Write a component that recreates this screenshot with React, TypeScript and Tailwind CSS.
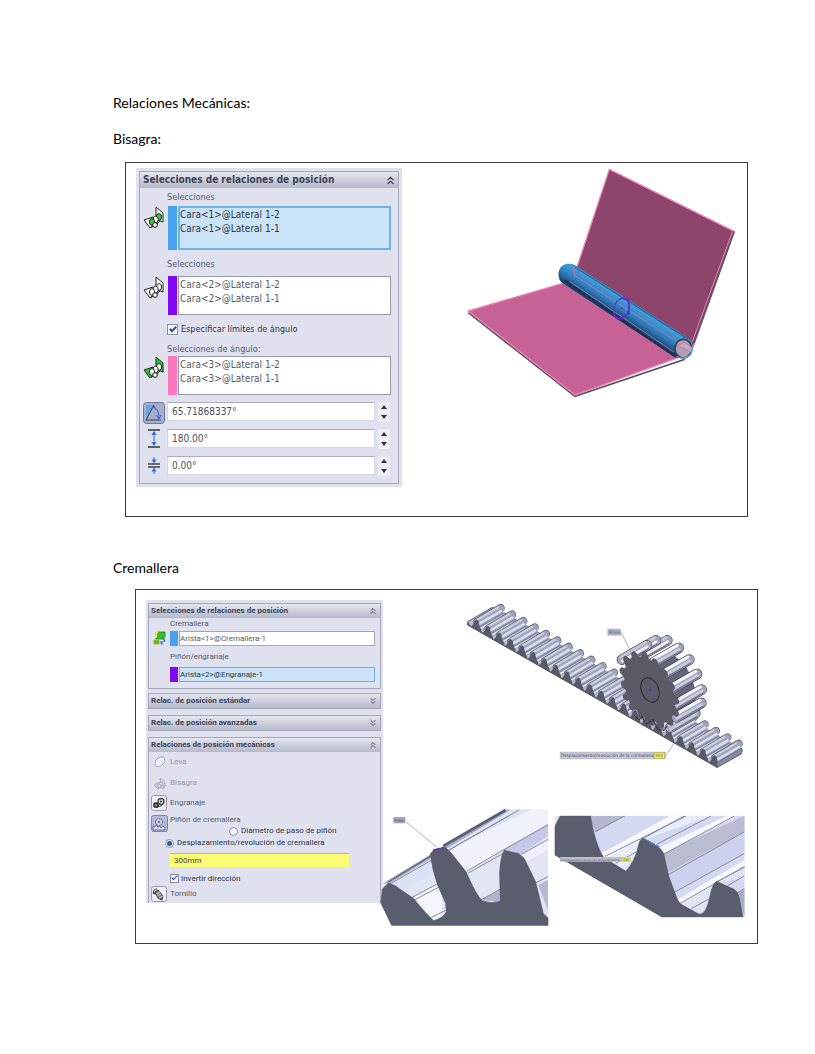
import React from "react";
import { ChevronsDown, ChevronsUp } from "lucide-react";

const uiFont = "font-['DejaVu_Sans_Condensed','DejaVu_Sans',sans-serif]";

function HingeIcon({ pin = "#fff", left = "#fff", right = "#fff" }: { pin?: string; left?: string; right?: string }) {
  return (
    <svg width="22" height="24" viewBox="0 0 22 24" stroke="#222" strokeWidth="1" strokeLinejoin="round" aria-hidden="true">
      <path d="M1 14l9-3 4 6-7 5z" fill={left} />
      <path d="M13 1l7 6v9l-5-2-2-4z" fill={right} />
      <ellipse cx="16" cy="11" rx="2.6" ry="3.4" fill={pin} />
      <ellipse cx="12.6" cy="13.6" rx="2.6" ry="3.4" fill="#fff" />
      <ellipse cx="9" cy="16" rx="2.6" ry="3.4" fill={pin} />
      <path d="M8 21l4-1 5-5" fill="none" />
      <circle cx="12" cy="19" r="2.4" fill="#eee" />
    </svg>
  );
}

function AngleIcon() {
  return (
    <svg width="22" height="22" viewBox="0 0 22 22" aria-hidden="true">
      <rect x="0.5" y="0.5" width="21" height="21" rx="3" fill="#a9adcc" stroke="#73779a" />
      <path d="M3 18L11 3H3z" fill="#6aa5e0" />
      <path d="M3 18L11 3M3 18h15" stroke="#333a55" fill="none" />
      <path d="M10 5c4 1 6 5 6 11M8 7l3-3 2 4M13.500 13l2.500 4 2-4" stroke="#2a63d8" fill="none" />
    </svg>
  );
}

function MaxIcon() {
  return (
    <svg width="14" height="19" viewBox="0 0 14 19" aria-hidden="true">
      <path d="M1 1h12M1 18h12" stroke="#333" strokeWidth="1.500" />
      <path d="M7 3v13" stroke="#2f6fe0" />
      <path d="M4.500 6L7 2l2.500 4zM4.500 13L7 17l2.500-4z" fill="#2f6fe0" />
    </svg>
  );
}

function MinIcon() {
  return (
    <svg width="14" height="19" viewBox="0 0 14 19" aria-hidden="true">
      <path d="M1 8h12M1 11h12" stroke="#444" strokeWidth="1.500" />
      <path d="M7 1v4M7 14v4" stroke="#2f6fe0" />
      <path d="M4.500 3.500h5L7 7.500zM4.500 15.500h5L7 11.500z" fill="#2f6fe0" />
    </svg>
  );
}

function RackSelectIcon() {
  return (
    <svg width="14" height="14" viewBox="0 0 14 14" aria-hidden="true">
      <path d="M3 2l2-1h7v5l-2 2H3z" fill="#2fc42f" stroke="#1a6b1a" strokeWidth="0.700" />
      <path d="M3 1h3L4 3v4H2V3z" fill="#f2df3c" />
      <path d="M1 9h5v4H1z" fill="#33c733" stroke="#c9a528" />
      <path d="M8 12l4-3M10 8l2 1-1 2M8 10v3h2" stroke="#2a62d8" fill="none" />
    </svg>
  );
}

function CamIcon() {
  return (
    <svg width="14" height="14" viewBox="0 0 14 14" aria-hidden="true">
      <path d="M2 9c0-4 3-7 7-7 4 0 3 4 1 7-2 3-8 4-8 0z" fill="#eceef5" stroke="#a3a5b0" />
    </svg>
  );
}

function GrayHingeIcon() {
  return (
    <svg width="14" height="14" viewBox="0 0 14 14" fill="#d4d6df" stroke="#a3a5b0" strokeWidth="0.800" aria-hidden="true">
      <path d="M1 9l5-3 3 4-4 3zM7 2l5 4v5l-4-1z" />
      <circle cx="8" cy="8" r="2" />
      <circle cx="6" cy="10" r="2" />
      <circle cx="9.500" cy="11" r="1.600" />
    </svg>
  );
}

function GearPairIcon() {
  return (
    <svg width="16" height="16" viewBox="0 0 16 16" aria-hidden="true">
      <rect x="0.500" y="0.500" width="15" height="15" rx="2" fill="#eceef5" stroke="#9a9db0" />
      <circle cx="10" cy="6.500" r="3" fill="#ddd" stroke="#444" strokeWidth="1.300" />
      <circle cx="10" cy="6.500" r="1" fill="#333" />
      <circle cx="5" cy="10" r="2.200" fill="#888" stroke="#222" strokeWidth="1.300" />
      <path d="M5 12.500l6-2" stroke="#333" />
    </svg>
  );
}

function PinionIcon() {
  return (
    <svg width="17" height="17" viewBox="0 0 17 17" aria-hidden="true">
      <rect x="0.500" y="0.500" width="16" height="16" rx="2" fill="#b3b6d6" stroke="#8286a8" />
      <circle cx="8" cy="7" r="3.500" fill="#c9cbe4" stroke="#5c6088" strokeDasharray="1.500 .7" />
      <circle cx="8" cy="7" r="1" fill="#5c6088" />
      <path d="M2 13v-2l2 1 1-2 2 2 2-1 1 2 2-2 2 2v2H2z" fill="#d5d7ea" stroke="#5c6088" strokeWidth="0.800" />
    </svg>
  );
}

function ScrewIcon() {
  return (
    <svg width="16" height="16" viewBox="0 0 16 16" aria-hidden="true">
      <rect x="0.500" y="0.500" width="15" height="15" rx="2" fill="#eceef5" stroke="#9a9db0" />
      <path d="M5 5l2-1 5 6-1 4-4-2-3-5z" fill="#777" stroke="#222" strokeWidth="0.800" />
      <path d="M5 8l4-2M6 10l4-2M8 12l4-2" stroke="#eee" strokeWidth="0.800" />
      <path d="M3 8c-1-3 0-5 3-5M3 8l-1-2M3 8l2-1" fill="none" stroke="#222" strokeWidth="0.900" />
    </svg>
  );
}

function PanelHeader({ title, open = true, big = false }: { title: string; open?: boolean; big?: boolean }) {
  const Icon = open ? ChevronsUp : ChevronsDown;
  return (
    <button
      type="button"
      aria-expanded={open}
      className={`flex w-full items-center justify-between bg-linear-to-b from-[#e4e6ef] to-[#b5b9c9] text-left font-bold text-[#3d4256] ${
        big ? "h-4 pr-px pl-[3px] text-[10px] leading-4" : "h-[14px] px-[2px] text-[8px] leading-3"
      }`}
    >
      <span className="whitespace-nowrap">{title}</span>
      <Icon size={big ? 13 : 10} strokeWidth={2} />
    </button>
  );
}

function SelectionList({
  id,
  icon,
  bar,
  lines,
  active = false,
}: {
  id: string;
  icon: React.ReactNode;
  bar: string;
  lines: string[];
  active?: boolean;
}) {
  return (
    <div className="flex pr-[7px]">
      <div className="w-7 shrink-0 pl-[3px]">{icon}</div>
      <div className={`mr-px w-[9px] shrink-0 ${bar}`} />
      <textarea
        id={id}
        readOnly
        defaultValue={lines.join("\n")}
        className={`block min-w-0 flex-1 resize-none overflow-hidden text-[10px] leading-[14px] outline-none ${
          active
            ? "h-11 border-2 border-[#6db5e6] bg-[#cbe3f6] text-[#2e3446]"
            : "h-[39px] border border-[#9699ac] bg-white px-px pt-px text-[#555a6b]"
        }`}
      />
    </div>
  );
}

function SpinRow({ label, value, icon }: { label: string; value: string; icon: React.ReactNode }) {
  return (
    <div className="flex h-[27px] items-start pr-2">
      <div className="flex w-[27px] shrink-0 justify-center">{icon}</div>
      <input
        aria-label={label}
        defaultValue={value}
        className="h-[19px] min-w-0 flex-1 border border-[#d5d8e3] border-t-[#a9acba] bg-white px-1 text-[10px] text-[#4a4f60] outline-none"
      />
      <div className="ml-[3px] flex h-5 w-3 flex-col justify-between bg-[#eceef4] py-[3px]">
        <button type="button" aria-label={`Aumentar ${label}`} className="flex justify-center">
          <svg width="6" height="4" viewBox="0 0 6 4"><path d="M0 4l3-4 3 4z" fill="#333" /></svg>
        </button>
        <button type="button" aria-label={`Reducir ${label}`} className="flex justify-center">
          <svg width="6" height="4" viewBox="0 0 6 4"><path d="M0 0l3 4 3-4z" fill="#333" /></svg>
        </button>
      </div>
    </div>
  );
}

const boxClass =
  "relative shrink-0 appearance-none border border-[#8b8fa3] bg-[#f3f5fa] after:absolute after:border-[#2f4f9a] checked:after:content-['']";

function HingePanel() {
  return (
    <form className={`w-[266px] shrink-0 self-start bg-[#dfe2ee] p-[3px] text-[9px] ${uiFont}`}>
      <div className="border border-[#a5a8ba]">
        <PanelHeader title="Selecciones de relaciones de posición" big />
        <label htmlFor="h1" className="block h-[18px] pl-[27px] leading-[18px] text-[#555a6b]">Selecciones</label>
        <SelectionList id="h1" active bar="bg-[#47a3f0]" icon={<HingeIcon pin="#3c3" />} lines={["Cara<1>@Lateral 1-2", "Cara<1>@Lateral 1-1"]} />
        <label htmlFor="h2" className="block h-[26px] pl-[27px] leading-[28px] text-[#555a6b]">Selecciones</label>
        <SelectionList id="h2" bar="bg-[#8208f2]" icon={<HingeIcon />} lines={["Cara<2>@Lateral 1-2", "Cara<2>@Lateral 1-1"]} />
        <label className="flex h-7 items-center gap-[3px] pl-[27px] text-[#2e3446]">
          <input
            type="checkbox"
            defaultChecked
            className={`${boxClass} size-[11px] after:top-0 after:left-[3px] after:h-[7px] after:w-1 after:rotate-45 after:border-r-2 after:border-b-2`}
          />
          Especificar límites de ángulo
        </label>
        <label htmlFor="h3" className="block h-[13px] pl-[27px] leading-[13px] text-[#555a6b]">Selecciones de ángulo:</label>
        <SelectionList id="h3" bar="bg-[#fc77be]" icon={<HingeIcon left="#2c3" right="#2c3" />} lines={["Cara<3>@Lateral 1-2", "Cara<3>@Lateral 1-1"]} />
        <div className="pt-[7px]">
          <SpinRow label="Ángulo" value="65.71868337°" icon={<AngleIcon />} />
          <SpinRow label="Ángulo máximo" value="180.00°" icon={<MaxIcon />} />
          <SpinRow label="Ángulo mínimo" value="0.00°" icon={<MinIcon />} />
        </div>
      </div>
    </form>
  );
}

function EntityField({ id, value, bar, icon, active = false }: { id: string; value: string; bar: string; icon?: React.ReactNode; active?: boolean }) {
  return (
    <div className="flex h-[15px] pr-[5px]">
      <div className="w-[21px] shrink-0 pl-1">{icon}</div>
      <div className={`mr-px w-2 shrink-0 ${bar}`} />
      <input
        id={id}
        readOnly
        defaultValue={value}
        className={`min-w-0 flex-1 border text-[8px] outline-none ${
          active ? "border-[#6db5e6] bg-[#cbe3f6] text-[#2e3446]" : "border-[#a5a8ba] bg-white text-[#555a6b]"
        }`}
      />
    </div>
  );
}

function MateButton({ icon, label, muted = false, size }: { icon: React.ReactNode; label: string; muted?: boolean; size: string }) {
  return (
    <button type="button" className={`flex w-full pl-[2px] text-left ${muted ? "text-[#9699a5]" : "text-[#555a6b]"} ${size}`}>
      <span className={`flex w-[19px] shrink-0 ${muted ? "pl-[2px]" : ""}`}>{icon}</span>
      {label}
    </button>
  );
}

function RackPanel() {
  const radio =
    "relative size-[9px] shrink-0 appearance-none rounded-full border border-[#8b8fa3] bg-[#f3f5fa] checked:after:absolute checked:after:inset-px checked:after:rounded-full checked:after:bg-[#23609c] checked:after:content-['']";
  return (
    <form className="w-[237px] shrink-0 self-start bg-[#dfe2ee] px-[2px] pt-[3px] font-['Roboto','DejaVu_Sans_Condensed',sans-serif] text-[8px]">
      <div className="h-[86px] border border-[#a5a8ba]">
        <PanelHeader title="Selecciones de relaciones de posición" />
        <label htmlFor="r1" className="block h-[13px] pl-[21px] leading-3 text-[#555a6b]">Cremallera</label>
        <EntityField id="r1" value="Arista<1>@Cremallera-1" bar="bg-[#47a3f0]" icon={<RackSelectIcon />} />
        <label htmlFor="r2" className="block h-[21px] pl-[21px] leading-[22px] text-[#555a6b]">Piñón/engranaje</label>
        <EntityField id="r2" value="Arista<2>@Engranaje-1" bar="bg-[#8208f2]" active />
      </div>
      <div className="mt-1 border border-[#a5a8ba]">
        <PanelHeader title="Relac. de posición estándar" open={false} />
      </div>
      <div className="mt-[6px] border border-[#a5a8ba]">
        <PanelHeader title="Relac. de posición avanzadas" open={false} />
      </div>
      <div className="mt-[6px] border border-b-0 border-[#a5a8ba] pb-px">
        <PanelHeader title="Relaciones de posición mecánicas" />
        <MateButton icon={<CamIcon />} label="Leva" muted size="h-5 items-center" />
        <MateButton icon={<GrayHingeIcon />} label="Bisagra" muted size="h-[22px] items-center" />
        <MateButton icon={<GearPairIcon />} label="Engranaje" size="h-[17px] items-center" />
        <div className="pt-1">
          <MateButton icon={<PinionIcon />} label="Piñón de cremallera" size="h-[10px] items-start leading-[10px]" />
        </div>
        <label className="ml-20 flex h-3 w-max items-center gap-[3px] text-[#2e3446]">
          <input type="radio" name="rack" className={radio} />
          Diámetro de paso de piñón
        </label>
        <label className="ml-[16px] flex h-3 w-max items-center gap-[3px] text-[#2e3446]">
          <input type="radio" name="rack" defaultChecked className={radio} />
          Desplazamiento/revolución de cremallera
        </label>
        <input
          aria-label="Desplazamiento por revolución"
          defaultValue="300mm"
          className="mt-1 ml-[21px] block h-[14px] w-[179px] border-t border-[#b9bb86] bg-[#fbfb74] px-1 text-[#44463a] outline-none"
        />
        <label className="mt-[5px] ml-[21px] flex h-[13px] items-center gap-[2px] text-[#2e3446]">
          <input
            type="checkbox"
            defaultChecked
            className={`${boxClass} size-[9px] after:-top-px after:left-[2px] after:h-[6px] after:w-[3px] after:rotate-45 after:border-r after:border-b`}
          />
          Invertir dirección
        </label>
        <MateButton icon={<ScrewIcon />} label="Tornillo" size="h-[17px] items-center" />
      </div>
    </form>
  );
}

function HingeModel() {
  return (
    <svg viewBox="402 163 345 353" className="min-w-0 flex-1" preserveAspectRatio="xMinYMin meet" role="img" aria-label="Bisagra">
      <defs>
        <linearGradient id="tube" gradientUnits="userSpaceOnUse" x1="540" y1="415" x2="498" y2="480">
          <stop offset="0" stopColor="#28699f" />
          <stop offset=".3" stopColor="#439ad6" />
          <stop offset=".65" stopColor="#2d7dbd" />
          <stop offset="1" stopColor="#173f66" />
        </linearGradient>
      </defs>
      <g transform="translate(455 160) scale(.33333)">
        <path d="M463 28L837 214L715 560L365 325z" fill="#8d456c" stroke="#e882b4" strokeWidth="4" />
        <path d="M838 214L716 550" stroke="#555864" strokeWidth="5" />
        <path d="M832 215L712 545" stroke="#e882b4" strokeWidth="3" />
        <path d="M40 458L360 709L690 598" fill="none" stroke="#50525c" strokeWidth="5" />
        <path d="M40 453L340 365L672 592L360 705z" fill="#c76297" stroke="#ed7fb5" strokeWidth="4" />
        <path d="M358 314L703 536C722 552 714 594 686 596L660 592L318 366C300 340 315 300 358 314z" fill="url(#tube)" />
        <path d="M330 362L662 590" stroke="#162f4b" strokeWidth="6" strokeDasharray="13 3" />
        <path d="M360 322L700 538" stroke="#245f90" strokeWidth="3" />
        <path d="M358 346L672 548M345 365L655 575M358 346v-25" stroke="#bd76b1" strokeWidth="2.500" fill="none" />
        <ellipse cx="685" cy="566" rx="25" ry="28" fill="#aaa2b3" stroke="#3b3d48" strokeWidth="5" />
        <path d="M667 558l20-11 23 14v16z" fill="#b9aec0" stroke="#e66ca7" strokeWidth="3" />
        <path d="M664 590l27 8" stroke="#e66ca7" strokeWidth="3" />
        <path d="M675 594q34 5 38-30" fill="none" stroke="#55aee8" strokeWidth="4" />
        <g fill="none" stroke="#6229d4" strokeWidth="4">
          <ellipse cx="499" cy="446" rx="22" ry="32" transform="rotate(18 499 446)" strokeDasharray="15 3" />
          <path d="M500 414l22 4v42l-33 17-13-12M497 445h5" />
        </g>
      </g>
    </svg>
  );
}

const TEETH = Array.from({ length: 22 }, (_, i) => ({ x: 66 + i * 34, y: 76 + i * 19.4 }));

const GEAR_TIPS: [number, number][] = [
  [507, 186], [534, 171], [568, 171], [602, 194], [634, 229], [657, 272], [671, 319], [670, 359],
  [652, 390], [620, 400], [589, 390], [555, 370], [525, 340], [505, 308], [500, 268], [495, 225],
];

function gearOutline() {
  const cx = 586;
  const cy = 286;
  return (
    GEAR_TIPS.map(([x, y], i) => {
      const [nx, ny] = GEAR_TIPS[(i + 1) % GEAR_TIPS.length];
      const [px, py] = GEAR_TIPS[(i + GEAR_TIPS.length - 1) % GEAR_TIPS.length];
      const at = (t: number, s: number) => {
        const [tx, ty] = t < 0 ? [px, py] : [nx, ny];
        const qx = x + (tx - x) * Math.abs(t);
        const qy = y + (ty - y) * Math.abs(t);
        return `${cx + (qx - cx) * s} ${cy + (qy - cy) * s}`;
      };
      return `${i ? "L" : "M"}${at(-0.2, 0.98)}Q${at(0, 1.04)} ${at(0.2, 0.98)}L${at(0.34, 0.88)}Q${at(0.5, 0.83)} ${at(0.66, 0.88)}`;
    }).join("") + "z"
  );
}

function RackAssembly() {
  const profile = TEETH.map(({ x, y }) => `L${x - 19} ${y + 18}Q${x - 12} ${y + 16} ${x - 8} ${y + 4}Q${x - 2} ${y - 9} ${x + 5} ${y + 4}Q${x + 8} ${y + 22} ${x + 12} ${y + 26}`).join("");
  const tooth = (x: number, y: number, i: number) => (
    <g key={i} strokeLinecap="round">
      <path d={`M${x + 12} ${y + 20}l64 -37`} stroke="#9da1b9" strokeWidth="16" />
      <path d={`M${x + 1} ${y + 5}l70 -42`} stroke="#5c5f6e" strokeWidth="24" />
      <path d={`M${x + 1} ${y + 6}l70 -42`} stroke="#9ea2ba" strokeWidth="21" />
      <path d={`M${x - 4} ${y + 1}l70 -41`} stroke="#c9ccd9" strokeWidth="7" strokeLinecap="butt" />
      <path d={`M${x + 3} ${y + 13}l72 -42`} stroke="#d9ddf2" strokeWidth="8" strokeLinecap="butt" />
      <path d={`M${x + 8} ${y + 20}l70 -41`} stroke="#686c82" strokeWidth="2" strokeLinecap="butt" />
      <path d={`M${x + 10} ${y + 25}l66 -38`} stroke="#dfe2f2" strokeWidth="5" strokeLinecap="butt" />
    </g>
  );
  return (
    <g transform="translate(455 595) scale(.33333)">
      <path d="M38 80L112 37L150 55L858 462V477L786 517L38 90z" fill="#b6bad0" stroke="#595c6a" strokeWidth="3" />
      {TEETH.map(({ x, y }, i) => tooth(x, y, i))}
      <path d={`M38 79${profile}L786 502V518L38 91z`} fill="#585a66" strokeLinejoin="round" />
      <path d="M790 501L860 459V476L786 518z" fill="#868aa1" stroke="#595c6a" strokeWidth="2" />
      <path d="M600 200L650 175L690 210L712 250L724 300L715 345L655 390z" fill="#62667a" />
      {[...GEAR_TIPS.slice(0, 9)].reverse().map(([x, y], i) => (
        <g key={i} strokeLinecap="round">
          <path d={`M${x - 6} ${y + 8}l75 -43`} stroke="#444651" strokeWidth="32" />
          <path d={`M${x - 6} ${y + 8}l75 -43`} stroke="#a2a6b8" strokeWidth="28" />
          <path d={`M${x - 10} ${y}l75 -43`} stroke={i < 6 ? "#f4f6fc" : "#c0c4d6"} strokeWidth="9" />
          <path d={`M${x - 5} ${y + 12}l75 -43`} stroke={i > 5 ? "#eff2fc" : "#c9cce0"} strokeWidth="8" />
          <path d={`M${x - 1} ${y + 18}l75 -43`} stroke="#666a7a" strokeWidth="3" />
        </g>
      ))}
      <path d={gearOutline()} fill="#595b67" stroke="#555763" strokeWidth="3" strokeLinejoin="round" />
      <path d="M542 365l10 10 8-12 14 25 20-14 14 30 20 2 15-22" fill="none" stroke="#1f2026" strokeWidth="3" strokeDasharray="9 4" />
      <ellipse cx="585" cy="285" rx="26" ry="38" transform="rotate(-22 585 285)" fill="none" stroke="#2c2d35" strokeWidth="3" />
      <path d="M580 286h9M585 281v9" stroke="#6c2bd9" strokeWidth="3" />
      <path d="M498 112L530 175M632 482L658 444" stroke="#8a8b86" strokeWidth="2" />
      <rect x="457" y="101" width="41" height="21" fill="#b4b6ca" />
      <text x="461" y="117" fontSize="14" fill="#4c4f60">Piñón</text>
      <rect x="315" y="471" width="317" height="21" fill="#c6c7d6" stroke="#a6a8b8" />
      <rect x="597" y="472" width="32" height="19" fill="#ece76a" stroke="#77752f" />
      <text x="318" y="487" fontSize="14" fill="#4c4f60">Desplazamiento/revolución de la cremallera:</text>
      <text x="601" y="487" fontSize="13" fill="#77742c">300</text>
    </g>
  );
}

function PinionDetail() {
  return (
    <g transform="translate(375 800) scale(.33333)">
      <clipPath id="detailA"><path d="M22 252L40 240L390 28H519V378H50L20 310z" /></clipPath>
      <g clipPath="url(#detailA)">
        <path d="M18 250L395 28H519V378H18z" fill="#e1e4f3" />
        <path d="M18 250L395 28L410 28L45 250z" fill="#a9aec8" />
        <path d="M45 250L440 28H480L80 275z" fill="#dce1f5" />
        <path d="M222 147L470 28H519V72L385 147L276 215z" fill="#f0f2fb" />
        <path d="M388 149L519 73V108L440 162z" fill="#c4c7e6" />
        <path d="M115 290L200 245V340L180 362z" fill="#f4f6fc" />
        <path d="M318 300L375 270V305z" fill="#aeb3d0" />
        <path d="M440 162L519 112V150L455 185z" fill="#eef0fb" />
        <path d="M490 255L519 240V330z" fill="#b4b8d2" />
        <path d="M45 252L400 48M110 293L190 250M118 300L200 257M170 352L214 330M222 150L434 29M276 213L385 150L519 74M280 219L385 160M318 300L380 265M440 163L519 118M483 248L519 230" fill="none" stroke="#878a91" strokeWidth="3" />
      </g>
      <path d="M40 246L180 160" stroke="#62667c" strokeWidth="4" />
      <path d="M205 138L392 30" stroke="#5d6178" strokeWidth="9" />
      <path d="M18 310L22 268L40 249L60 257L115 295Q155 345 176 362Q205 355 214 335L212 310L188 255Q172 210 166 162L178 148L210 142L224 154L273 215Q303 285 322 303Q350 312 376 304L374 220Q376 170 388 151L432 161L448 176L482 246L505 341L519 354V376H50z" fill="#5a5d6d" stroke="#515463" strokeWidth="2" />
      <path d="M174 151L212 140" stroke="#6918ee" strokeWidth="4" strokeDasharray="8 5" />
      <path d="M90 63L186 142" stroke="#8a8b86" strokeWidth="2" />
      <rect x="55" y="51" width="36" height="19" fill="#a4a7bd" />
      <text x="58" y="65" fontSize="12" fill="#4c4f60">Piñón</text>
    </g>
  );
}

function RackDetail() {
  return (
    <g transform="translate(545 805) scale(.33333)">
      <clipPath id="detailB"><path d="M29 32H599V337H29z" /></clipPath>
      <g clipPath="url(#detailB)">
        <path d="M130 32H599V337H460L160 160z" fill="#d4d8f0" />
        <path d="M29 32H46L29 65z" fill="#e3e6f4" />
        <path d="M135 32H240L150 83z" fill="#b5b8cf" />
        <path d="M175 153L410 32H500L300 103L240 198z" fill="#e8ebf8" />
        <path d="M170 145L375 32H410L185 158z" fill="#f8f9fe" />
        <path d="M343 128L545 32H575L355 148z" fill="#f7f8ff" />
        <path d="M355 145L599 32V80L365 205z" fill="#babdd2" />
        <path d="M365 205L599 80V145L385 262z" fill="#cdd1ee" />
        <path d="M395 285L599 165V190L405 298z" fill="#f8f9fe" />
        <path d="M405 298L599 190V220L515 232L470 325z" fill="#e0e4f5" />
        <path d="M575 265L599 252V337z" fill="#a9adc6" />
        <path d="M150 80L240 32M180 154L425 32M212 175L275 140M295 100L420 32M335 118L500 32M355 148L570 32M368 210L599 80M385 264L599 145M404 296L599 184M440 310L500 278M515 230L599 187M548 242L599 212M575 265L599 250" stroke="#898c97" strokeWidth="3" />
        <path d="M29 65L46 32H136L145 78Q158 130 176 158L243 199Q270 170 281 120Q284 104 294 99L340 126Q357 138 359 160L370 210L394 276Q398 290 408 298L462 328Q485 330 496 270Q501 240 514 229L567 253Q580 262 583 280L594 337H350L29 151z" fill="#5a5d6d" stroke="#515463" strokeWidth="2" />
        <path d="M308 107L344 126" stroke="#3389d6" strokeWidth="4" strokeDasharray="10 4" />
      </g>
      <path d="M29 151L350 337H29z" fill="#fff" />
      <rect x="45" y="156" width="212" height="14" fill="#bdbecb" />
      <rect x="231" y="156" width="26" height="14" fill="#dfd861" />
      <text x="46" y="167" fontSize="9" fill="#60636e">Desplazamiento/revolución de la cremallera:</text>
      <text x="234" y="167" fontSize="10" fill="#77742c">300</text>
    </g>
  );
}

function RackModel() {
  return (
    <svg
      viewBox="383 590 374 353"
      className="min-w-0 flex-1 overflow-visible font-['DejaVu_Sans_Condensed','DejaVu_Sans',sans-serif]"
      preserveAspectRatio="xMinYMin meet"
      role="img"
      aria-label="Cremallera y piñón"
    >
      <RackAssembly />
      <PinionDetail />
      <RackDetail />
    </svg>
  );
}

export default function App() {
  return (
    <main className="min-h-screen bg-white pt-[93px] pr-[57px] pb-[110px] pl-[113px] font-['Lato','Liberation_Sans',sans-serif] text-[14px] leading-5 text-black">
      <h1>Relaciones Mecánicas:</h1>
      <section>
        <h2 className="mt-4">Bisagra:</h2>
        <div className="mt-[13px] mr-[10px] ml-3 flex border border-[#3a3a3a] pl-[10px]">
          <div className="flex pt-[5px] pb-[29px]">
            <HingePanel />
          </div>
          <HingeModel />
        </div>
      </section>
      <section>
        <h2 className="mt-[41px]">Cremallera</h2>
        <div className="mt-[11px] ml-[22px] flex border border-[#3a3a3a] pl-[10px]">
          <div className="flex pt-[10px] pb-[39px]">
            <RackPanel />
          </div>
          <RackModel />
        </div>
      </section>
    </main>
  );
}
